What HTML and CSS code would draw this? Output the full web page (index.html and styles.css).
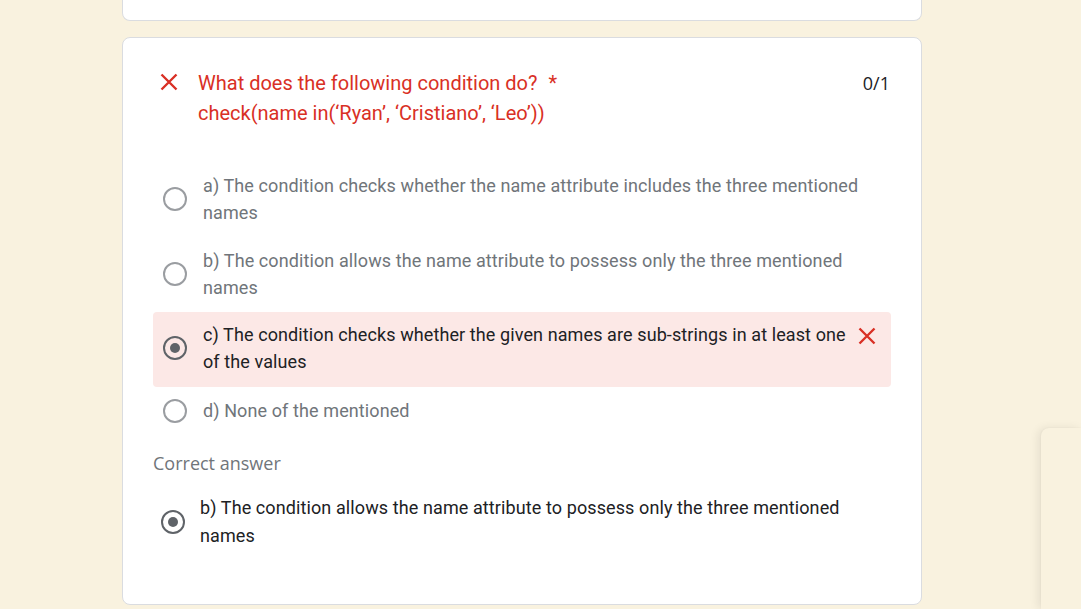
FILE: index.html
```html
<!DOCTYPE html>
<html>
<head>
<meta charset="utf-8">
<link rel="stylesheet" href="styles.css">
</head>
<body>
<div class="page">
  <div class="card card-prev"></div>
  <div class="card card-q">
    <div class="q-head">
      <div class="q-icon">
        <svg width="18" height="18" viewBox="0 0 18 18"><path d="M1.5 1.5L16.5 16.5M16.5 1.5L1.5 16.5" stroke="#d93025" stroke-width="2.4" fill="none"/></svg>
      </div>
      <div class="q-title">What does the following condition do? <span class="req">*</span><br>check(name in(‘Ryan’, ‘Cristiano’, ‘Leo’))</div>
      <div class="q-score">0/1</div>
    </div>
    <div class="options">
      <div class="opt">
        <span class="radio"></span>
        <span class="opt-text">a) The condition checks whether the name attribute includes the three mentioned names</span>
      </div>
      <div class="opt opt-b">
        <span class="radio"></span>
        <span class="opt-text">b) The condition allows the name attribute to possess only the three mentioned names</span>
      </div>
      <div class="opt opt-wrong">
        <span class="radio radio-on"></span>
        <span class="opt-text">c) The condition checks whether the given names are sub-strings in at least one of the values</span>
        <svg class="opt-x" width="18" height="18" viewBox="0 0 18 18"><path d="M1.5 1.5L16.5 16.5M16.5 1.5L1.5 16.5" stroke="#d93025" stroke-width="2.4" fill="none"/></svg>
      </div>
      <div class="opt opt-single">
        <span class="radio"></span>
        <span class="opt-text">d) None of the mentioned</span>
      </div>
    </div>
    <div class="correct-label">Correct answer</div>
    <div class="correct-opt">
      <span class="radio radio-on"></span>
      <span class="correct-text">b) The condition allows the name attribute to possess only the three mentioned names</span>
    </div>
  </div>
</div>
<div class="side-panel"></div>
</body>
</html>
```
FILE: styles.css
```css
html, body {
  margin: 0;
  padding: 0;
  background: #f9f2df;
  overflow: hidden;
  height: 609px;
}
body {
  font-family: Roboto, "Liberation Sans", sans-serif;
}
.page {
  width: 800px;
  margin-left: 122px;
}
.card {
  background: #fff;
  border: 1px solid #dadce0;
  border-radius: 8px;
  box-sizing: border-box;
}
.card-prev {
  height: 21px;
  border-top: none;
  border-radius: 0 0 8px 8px;
  margin-bottom: 16px;
}
.card-q {
  padding: 30px 30px 54px 30px;
  height: 568px;
}
.q-head {
  display: flex;
  align-items: flex-start;
}
.q-icon {
  width: 45px;
  flex: none;
  padding-top: 5px;
}
.q-icon svg {
  display: block;
  margin-left: 7px;
}
.q-title {
  flex: 1;
  color: #d93025;
  font-size: 20px;
  line-height: 30px;
}
.req {
  margin-left: 6px;
}
.q-score {
  font-family: "Open Sans", sans-serif;
  font-size: 18px;
  color: #202124;
  line-height: 30px;
  padding-right: 1px;
}
.options {
  margin-top: 35px;
}
.opt {
  display: flex;
  align-items: center;
  padding: 9px 12px 12px 10px;
  border-radius: 4px;
}
.opt-b {
  padding-bottom: 11px;
}
.opt-single {
  padding-top: 10px;
  padding-bottom: 14px;
}
.opt-wrong {
  background: #fce8e6;
  padding-top: 8px;
  padding-bottom: 12px;
}
.radio {
  flex: none;
  width: 24px;
  height: 24px;
  box-sizing: border-box;
  border: 2px solid #9a9da1;
  border-radius: 50%;
  margin-right: 16px;
  position: relative;
}
.radio-on {
  border-color: #5f6368;
}
.radio-on::after {
  content: "";
  position: absolute;
  left: 5px;
  top: 5px;
  width: 10px;
  height: 10px;
  border-radius: 50%;
  background: #5f6368;
}
.opt-text {
  flex: 1;
  font-size: 18px;
  letter-spacing: 0.1px;
  line-height: 27px;
  color: #70757a;
}
.opt-wrong .opt-text {
  color: #202124;
  padding-top: 1px;
}
.opt-x {
  flex: none;
  margin-left: 6px;
  margin-right: 3px;
  align-self: flex-start;
  margin-top: 7px;
}
.correct-label {
  margin-top: 13px;
  font-family: "Open Sans", sans-serif;
  font-weight: 500;
  font-size: 18px;
  line-height: 24px;
  color: #70757a;
}
.correct-opt {
  display: flex;
  align-items: center;
  margin-top: 19px;
  padding-left: 8px;
}
.correct-opt .radio {
  margin-right: 15px;
}
.correct-text {
  flex: 1;
  font-size: 18px;
  letter-spacing: 0.1px;
  line-height: 28px;
  color: #202124;
  padding-right: 40px;
}
.side-panel {
  position: absolute;
  left: 1041px;
  top: 428px;
  width: 40px;
  height: 181px;
  background: #f9f2df;
  border-radius: 8px 0 0 0;
  box-shadow: -3px 0 10px rgba(0, 0, 0, 0.08), 0 0 2px rgba(0, 0, 0, 0.06);
}
```
